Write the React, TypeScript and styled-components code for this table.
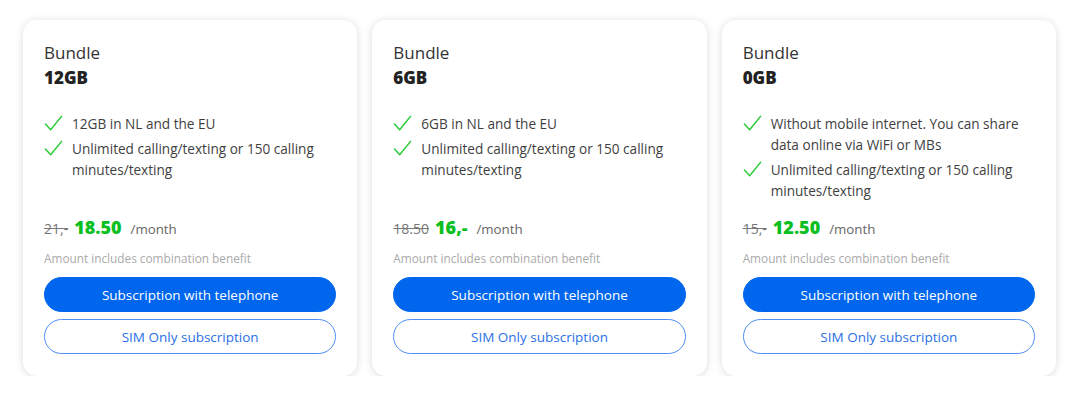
import React from 'react';
import styled, { createGlobalStyle } from 'styled-components';

interface Plan {
  size: string;
  features: string[];
  oldPrice: string;
  price: string;
}

const plans: Plan[] = [
  {
    size: '12GB',
    features: ['12GB in NL and the EU', 'Unlimited calling/texting or 150 calling minutes/texting'],
    oldPrice: '21,-',
    price: '18.50',
  },
  {
    size: '6GB',
    features: ['6GB in NL and the EU', 'Unlimited calling/texting or 150 calling minutes/texting'],
    oldPrice: '18.50',
    price: '16,-',
  },
  {
    size: '0GB',
    features: [
      'Without mobile internet. You can share data online via WiFi or MBs',
      'Unlimited calling/texting or 150 calling minutes/texting',
    ],
    oldPrice: '15,-',
    price: '12.50',
  },
];

const GlobalStyle = createGlobalStyle`
  body {
    margin: 0;
    background: #ffffff;
    font-family: "Open Sans", "Noto Sans", "Liberation Sans", sans-serif;
    color: #333;
  }
`;

const Grid = styled.div`
  display: grid;
  grid-template-columns: repeat(3, 1fr);
  gap: 15px;
  padding: 20px 24px 0 23px;
`;

const Card = styled.div`
  display: flex;
  flex-direction: column;
  background: #fff;
  border-radius: 14px;
  box-shadow: 0 1px 9px rgba(0, 0, 0, 0.14);
  padding: 21px 21px 22px 21px;
`;

const Label = styled.div`
  font-size: 17px;
  line-height: 24px;
  color: #333;
`;

const Size = styled.div`
  font-size: 17px;
  line-height: 24px;
  font-weight: 800;
  color: #222;
  margin-top: 1px;
`;

const Features = styled.ul`
  list-style: none;
  margin: 23px 0 14px 0;
  padding: 0;
  display: flex;
  flex-direction: column;
  gap: 4px;
`;

const Feature = styled.li`
  display: flex;
  align-items: flex-start;
  gap: 9px;
  font-size: 13.6px;
  line-height: 21px;
  color: #3f3f3f;
`;

const Check = styled.svg`
  flex: 0 0 19px;
  width: 19px;
  height: 19px;
  margin-top: 1px;
`;

const PriceRow = styled.div`
  margin-top: auto;
  display: flex;
  align-items: baseline;
  gap: 6px;
  line-height: 24px;
`;

const OldPrice = styled.span`
  font-size: 14px;
  color: #777;
  text-decoration: line-through;
`;

const Price = styled.span`
  font-size: 18px;
  font-weight: 800;
  color: #0bbf1f;
  margin-right: 3px;
`;

const Period = styled.span`
  font-size: 13.3px;
  color: #666;
`;

const Note = styled.div`
  font-size: 11.8px;
  line-height: 18px;
  color: #aaa;
  margin-top: 8px;
`;

const Button = styled.button<{ $outline?: boolean }>`
  display: block;
  width: 100%;
  height: 35px;
  margin-top: ${props => (props.$outline ? '7px' : '10px')};
  border-radius: 18px;
  font-family: inherit;
  font-size: 13.5px;
  cursor: pointer;
  border: 1px solid ${props => (props.$outline ? '#4d8ef5' : '#0066ee')};
  background: ${props => (props.$outline ? '#fff' : '#0066ee')};
  color: ${props => (props.$outline ? '#2a6fe6' : '#fff')};
`;

const CheckIcon = () => (
  <Check viewBox="0 0 20 20" fill="none">
    <path d="M1.5 10.5 L7 16.5 L18.5 2.5" stroke="#2ccc3a" strokeWidth="1.6" strokeLinecap="round" strokeLinejoin="round" />
  </Check>
);

export default function App() {
  return (
    <>
      <GlobalStyle />
      <Grid>
        {plans.map(plan => (
          <Card key={plan.size}>
            <Label>Bundle</Label>
            <Size>{plan.size}</Size>
            <Features>
              {plan.features.map(f => (
                <Feature key={f}>
                  <CheckIcon />
                  <span>{f}</span>
                </Feature>
              ))}
            </Features>
            <PriceRow>
              <OldPrice>{plan.oldPrice}</OldPrice>
              <Price>{plan.price}</Price>
              <Period>/month</Period>
            </PriceRow>
            <Note>Amount includes combination benefit</Note>
            <Button>Subscription with telephone</Button>
            <Button $outline>SIM Only subscription</Button>
          </Card>
        ))}
      </Grid>
    </>
  );
}
